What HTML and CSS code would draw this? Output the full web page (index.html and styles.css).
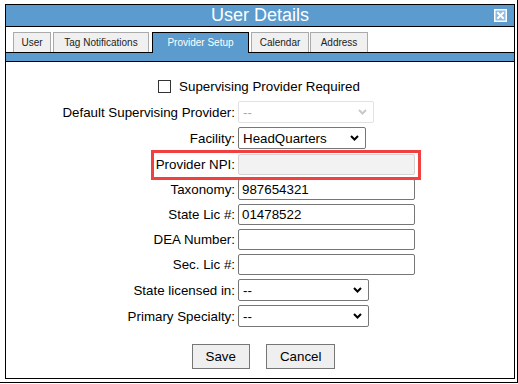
FILE: index.html
```html
<!DOCTYPE html>
<html lang="en">
<head>
    <meta charset="UTF-8">
    <meta name="viewport" content="width=device-width, initial-scale=1.0">
    <title>User Details</title>
    <link rel="stylesheet" href="styles.css">
</head>
<body>
    <div class="frame">
        <div class="dialog">
            <div class="titlebar">
                <span class="title">User Details</span>
                <span class="close">
                    <svg width="13" height="13" viewBox="0 0 13 13">
                        <rect x="0.75" y="0.75" width="11.5" height="11.5" fill="#8dbbe3" stroke="#fff" stroke-width="1.5"/>
                        <path d="M4 4 L9 9 M9 4 L4 9" stroke="#fff" stroke-width="2" stroke-linecap="square"/>
                    </svg>
                </span>
            </div>

            <ul class="tabs">
                <li class="tab tab-user">User</li>
                <li class="tab tab-tags">Tag Notifications</li>
                <li class="tab tab-provider active">Provider Setup</li>
                <li class="tab tab-calendar">Calendar</li>
                <li class="tab tab-address">Address</li>
            </ul>
            <div class="strip"></div>

            <div class="form">
                <div class="check-row">
                    <input type="checkbox" id="sup-req">
                    <label for="sup-req">Supervising Provider Required</label>
                </div>

                <div class="row">
                    <label>Default Supervising Provider:</label>
                    <div class="select disabled wide">
                        <span>--</span>
                        <svg class="chev" width="9" height="6" viewBox="0 0 9 6"><path d="M1 1 L4.5 4.5 L8 1" fill="none" stroke="#c8c8c8" stroke-width="2"/></svg>
                    </div>
                </div>

                <div class="row">
                    <label>Facility:</label>
                    <div class="select facility">
                        <span>HeadQuarters</span>
                        <svg class="chev" width="9" height="6" viewBox="0 0 9 6"><path d="M1 1 L4.5 4.5 L8 1" fill="none" stroke="#000" stroke-width="2"/></svg>
                    </div>
                </div>

                <div class="row npi">
                    <label>Provider NPI:</label>
                    <input type="text" class="text readonly" readonly>
                    <div class="highlight"></div>
                </div>

                <div class="row">
                    <label>Taxonomy:</label>
                    <input type="text" class="text" value="987654321">
                </div>

                <div class="row">
                    <label>State Lic #:</label>
                    <input type="text" class="text" value="01478522">
                </div>

                <div class="row">
                    <label>DEA Number:</label>
                    <input type="text" class="text">
                </div>

                <div class="row">
                    <label>Sec. Lic #:</label>
                    <input type="text" class="text">
                </div>

                <div class="row">
                    <label>State licensed in:</label>
                    <div class="select state">
                        <span>--</span>
                        <svg class="chev" width="9" height="6" viewBox="0 0 9 6"><path d="M1 1 L4.5 4.5 L8 1" fill="none" stroke="#000" stroke-width="2"/></svg>
                    </div>
                </div>

                <div class="row">
                    <label>Primary Specialty:</label>
                    <div class="select state">
                        <span>--</span>
                        <svg class="chev" width="9" height="6" viewBox="0 0 9 6"><path d="M1 1 L4.5 4.5 L8 1" fill="none" stroke="#000" stroke-width="2"/></svg>
                    </div>
                </div>

                <div class="buttons">
                    <button>Save</button>
                    <button>Cancel</button>
                </div>
            </div>
        </div>
    </div>
</body>
</html>
```

FILE: styles.css
```css
* {
    box-sizing: border-box;
}
body {
    margin: 0;
    width: 518px;
    height: 384px;
    overflow: hidden;
    background: #fff;
    font-family: 'Liberation Sans', Arial, sans-serif;
    font-size: 13.33px;
    color: #000;
}
.frame {
    width: 518px;
    height: 383px;
    padding: 4px 2px 3px 5px;
    border-right: 1px solid #000;
    border-bottom: 1px solid #000;
}
.dialog {
    height: 100%;
    border: 1px solid #000;
    display: flex;
    flex-direction: column;
}
.titlebar {
    height: 22px;
    background: #5b9bcd;
    border-bottom: 1px solid #000;
    display: flex;
    align-items: center;
    justify-content: center;
    position: relative;
}
.title {
    color: #fff;
    font-size: 18px;
}
.close {
    position: absolute;
    right: 7px;
    top: 4px;
    display: flex;
}
.tabs {
    list-style: none;
    margin: 0;
    padding: 5px 0 0 7px;
    display: flex;
    gap: 2px;
    border-bottom: 1px solid #000;
}
.tab {
    height: 20px;
    line-height: 19px;
    text-align: center;
    font-size: 10px;
    color: #222;
    background: #f0f0f0;
    border: 1px solid #aaa;
    border-bottom: none;
}
.tab-user {
    width: 38px;
}
.tab-tags {
    width: 96px;
}
.tab-provider {
    width: 97px;
    margin-left: 1px;
}
.tab-calendar {
    width: 58px;
}
.tab-address {
    width: 58px;
    margin-left: -1px;
}
.tab.active {
    color: #fff;
    background: #5b9bcd;
    border: 1px solid #000;
    border-bottom: none;
    height: 21px;
    margin-bottom: -1px;
}
.strip {
    height: 9px;
    background: #5b9bcd;
    border-bottom: 1px solid #000;
}
.form {
    display: flex;
    flex-direction: column;
    gap: 4px;
}
.check-row {
    margin: 16px 0 3px;
    height: 16px;
    display: flex;
    align-items: center;
    justify-content: center;
    gap: 8px;
    padding-right: 2px;
}
.check-row input {
    appearance: none;
    width: 13px;
    height: 13px;
    margin: 0;
    border: 1px solid #333;
    background: #fff;
}
.row {
    display: flex;
    align-items: center;
    gap: 3px;
    position: relative;
}
.row label {
    width: 229px;
    text-align: right;
}
.row.npi {
    margin-top: 1px;
}
.select {
    height: 22px;
    border: 1px solid #767676;
    border-radius: 2px;
    background: #fff;
    display: flex;
    align-items: center;
    justify-content: space-between;
    padding: 0 6px 0 4px;
}
.select.wide {
    width: 136px;
}
.select.facility {
    width: 128px;
}
.select.state {
    width: 131px;
}
.select.disabled {
    border-color: #e2e2e2;
    color: #aaa;
}
.text {
    width: 177px;
    height: 21px;
    margin: 0;
    padding: 1px 3px;
    border: 1px solid #767676;
    border-radius: 2px;
    font-family: inherit;
    font-size: 13.33px;
    color: #000;
}
.text.readonly {
    background: #f2f2f2;
    border-color: #d4d4d4;
}
.highlight {
    position: absolute;
    left: 145px;
    top: -4px;
    width: 270px;
    height: 30px;
    border: 3px solid #f04040;
    pointer-events: none;
}
.buttons {
    margin-top: 13px;
    display: flex;
    justify-content: center;
    gap: 16px;
    padding-left: 7px;
}
button {
    height: 25px;
    padding: 0 13px;
    font-family: inherit;
    font-size: 13.33px;
    color: #000;
    background: #efefef;
    border: 1px solid #767676;
    border-radius: 0;
}
```
